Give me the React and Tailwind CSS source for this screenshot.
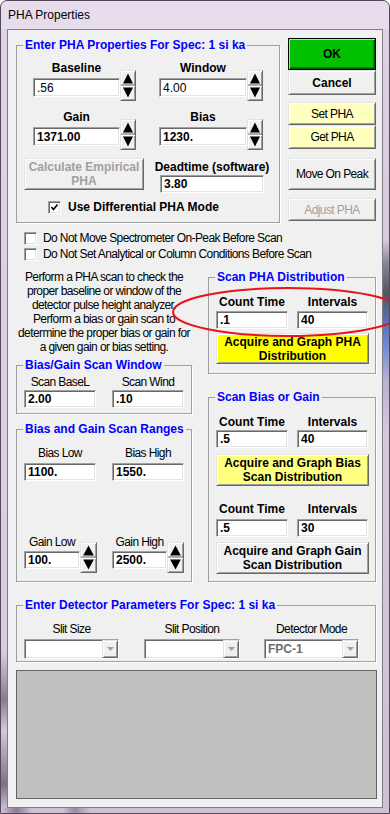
import React from 'react';

const reg = 'text-[12px] tracking-[-0.6px] leading-[14px]';
const bold = 'text-[12px] font-bold leading-[14px]';
const sunken =
  'border border-t-[#a0a0a0] border-l-[#a0a0a0] border-r-[#ffffff] border-b-[#ffffff] shadow-[inset_1px_1px_0_#696969,inset_-1px_-1px_0_#e3e3e3]';
const raised =
  'border border-t-[#e3e3e3] border-l-[#e3e3e3] border-r-[#696969] border-b-[#696969] shadow-[inset_1px_1px_0_#ffffff,inset_-1px_-1px_0_#a0a0a0]';

function Group({ title, className, children }) {
  return (
    <fieldset className={`border border-[#a0a0a0] shadow-[1px_1px_0_#ffffff] ${className}`}>
      <legend className="ml-[6px] px-[2px] text-[12px] font-bold leading-[14px] text-[#0000ff]">{title}</legend>
      {children}
    </fieldset>
  );
}

function Field({ value, className, weight = 'font-bold' }) {
  return (
    <div className={`bg-white ${sunken} flex items-center pl-[3px] text-[12px] leading-none text-black ${weight} ${className}`}>
      {value}
    </div>
  );
}

function Spinner({ className }) {
  return (
    <div className={`bg-[#f0f0f0] ${raised} ${className}`}>
      <svg viewBox="0 0 14 29" className="w-full h-full block" preserveAspectRatio="none">
        <polygon points="2,12.5 7,2.5 12,12.5" fill="#000" />
        <line x1="0" y1="14" x2="14" y2="14" stroke="#696969" strokeWidth="1" />
        <line x1="0" y1="15.5" x2="14" y2="15.5" stroke="#ffffff" strokeWidth="1" />
        <polygon points="2,16.5 12,16.5 7,26.5" fill="#000" />
      </svg>
    </div>
  );
}

function SpinField({ label, value, w, spinW = 'w-[16px]', weight = 'font-bold', labelClass = bold, rise = '-mt-[5px]', h = 'h-[19px]' }) {
  return (
    <div className="flex flex-col">
      <div className={`${w} text-center whitespace-nowrap ${labelClass}`}>{label}</div>
      <div className={`flex items-end ${rise}`}>
        <Field value={value} weight={weight} className={`${w} ${h} mb-[4px]`} />
        <Spinner className={`${spinW} h-[31px]`} />
      </div>
    </div>
  );
}

function LabeledField({ label, value, w, labelClass = bold, gap = 'mt-[2px]' }) {
  return (
    <div className={`${w} flex flex-col items-center`}>
      <div className={`whitespace-nowrap ${labelClass}`}>{label}</div>
      <Field value={value} className={`${w} h-[18px] ${gap}`} />
    </div>
  );
}

function Check({ checked }) {
  return (
    <div className={`w-[13px] h-[13px] shrink-0 bg-white ${sunken} flex items-center justify-center`}>
      {checked && (
        <svg viewBox="0 0 9 9" className="w-[9px] h-[9px]">
          <polyline points="1.5,4 3.5,6.5 7.5,1.5" fill="none" stroke="#000" strokeWidth="1.6" />
        </svg>
      )}
    </div>
  );
}

function Combo({ value, className }) {
  return (
    <div className={`bg-white ${sunken} flex ${className}`}>
      <div className="flex-1 flex items-center pl-[3px] text-[12px] font-bold text-[#6d6d6d]">{value}</div>
      <div className={`w-[16px] bg-[#f0f0f0] ${raised} flex items-center justify-center`}>
        <svg viewBox="0 0 7 4" className="w-[7px] h-[4px]">
          <polygon points="0,0 7,0 3.5,4" fill="#a0a0a0" />
        </svg>
      </div>
    </div>
  );
}

function Btn({ children, className }) {
  return (
    <button type="button" className={`${raised} flex flex-col items-center justify-center text-black ${className}`}>
      {children}
    </button>
  );
}

export default function App() {
  return (
    <div className="relative w-[390px] h-[814px] font-['Liberation_Sans',Arial,sans-serif] text-black rounded-t-[7px] border border-[#54495a] bg-gradient-to-b from-[#e7dded] to-[#d3c4da] flex flex-col overflow-hidden">
      {/* title bar */}
      <div className="h-[28px] flex items-center pl-[7px] text-[12px] leading-none">PHA Properties</div>

      <div className="flex-1 flex">
        <div className="w-[6px] bg-[linear-gradient(to_bottom,#dfd3e5_0%,#d9cce0_80%,#8a7b90_86%,#d4c6db_90%,#7f7086_97%,#cbbdd2_100%)]" />

        {/* client area */}
        <div className="flex-1 border border-[#85798b] bg-[#f0f0f0] flex flex-col">
          {/* top row */}
          <div className="flex pt-[8px] pl-[8px]">
            <Group title="Enter PHA Properties For Spec: 1 si ka" className="w-[264px] h-[185px]">
              <div className="flex gap-[23px] pl-[16px] pt-[9px]">
                <SpinField label="Baseline" value=".56" w="w-[87px]" weight="font-normal" />
                <SpinField label="Window" value="4.00" w="w-[88px]" weight="font-normal" />
              </div>
              <div className="flex gap-[23px] pl-[16px] pt-[9px]">
                <SpinField label="Gain" value="1371.00" w="w-[87px]" />
                <SpinField label="Bias" value="1230." w="w-[88px]" />
              </div>
              <div className="flex pl-[7px] mt-[8px]">
                <Btn className={`w-[120px] h-[32px] ${bold} text-[#a0a0a0]`}>
                  <span className="text-[#a0a0a0]">Calculate Empirical</span>
                  <span className="text-[#a0a0a0]">PHA</span>
                </Btn>
                <div className="ml-[16px] w-[104px] flex flex-col items-center pt-[2px]">
                  <div className={`whitespace-nowrap ${bold}`}>Deadtime (software)</div>
                  <Field value="3.80" className="w-[104px] h-[18px] mt-[1px]" />
                </div>
              </div>
              <div className="flex items-center gap-[7px] pl-[31px] mt-[7px] h-[14px]">
                <Check checked />
                <span className={bold}>Use Differential PHA Mode</span>
              </div>
            </Group>

            <div className="ml-[8px] w-[88px] flex flex-col">
              <button type="button" className={`h-[32px] border border-black bg-[#00c000] shadow-[inset_1px_1px_0_#9cf09c,inset_-1px_-1px_0_#005800,inset_-2px_-2px_0_#008a00] ${bold}`}>
                OK
              </button>
              <Btn className={`h-[25px] bg-[#f0f0f0] ${bold}`}>Cancel</Btn>
              <Btn className={`h-[23px] mt-[7px] bg-[#ffffc0] ${reg}`}>Set PHA</Btn>
              <Btn className={`h-[24px] bg-[#ffffc0] ${reg}`}>Get PHA</Btn>
              <Btn className={`h-[32px] mt-[9px] bg-[#f0f0f0] ${reg}`}>Move On Peak</Btn>
              <Btn className={`h-[23px] mt-[8px] bg-[#f0f0f0] ${reg}`}>
                <span className="text-[#a0a0a0]">Adjust PHA</span>
              </Btn>
            </div>
          </div>

          {/* option checkboxes */}
          <div className="flex flex-col gap-[2px] mt-[8px] pl-[16px]">
            <div className="flex items-center gap-[6px] h-[14px]">
              <Check />
              <span className={`whitespace-nowrap ${reg}`}>Do Not Move Spectrometer On-Peak Before Scan</span>
            </div>
            <div className="flex items-center gap-[6px] h-[14px]">
              <Check />
              <span className={`whitespace-nowrap ${reg}`}>Do Not Set Analytical or Column Conditions Before Scan</span>
            </div>
          </div>

          {/* middle area */}
          <div className="flex mt-[9px] pl-[8px]">
            <div className="w-[176px] flex flex-col">
              <p className={`-mx-[6px] text-center whitespace-nowrap ${reg}`}>
                Perform a PHA scan to check the
                <br />
                proper baseline or window of the
                <br />
                detector pulse height analyzer.
                <br />
                Perform a bias or gain scan to
                <br />
                determine the proper bias or gain for
                <br />
                a given gain or bias setting.
              </p>

              <Group title="Bias/Gain Scan Window" className="w-[176px] h-[56px] mt-[4px]">
                <div className="flex gap-[16px] pl-[7px] pt-[3px]">
                  <LabeledField label="Scan BaseL" value="2.00" w="w-[72px]" labelClass={reg} gap="mt-[1px]" />
                  <LabeledField label="Scan Wind" value=".10" w="w-[72px]" labelClass={reg} gap="mt-[1px]" />
                </div>
              </Group>

              <Group title="Bias and Gain Scan Ranges" className="w-[176px] h-[160px] mt-[8px]">
                <div className="flex gap-[16px] pl-[7px] pt-[10px]">
                  <LabeledField label="Bias Low" value="1100." w="w-[72px]" labelClass={reg} gap="mt-[3px]" />
                  <LabeledField label="Bias High" value="1550." w="w-[72px]" labelClass={reg} gap="mt-[3px]" />
                </div>
                <div className="flex pl-[7px] mt-[54px]">
                  <div className="w-[88px]">
                    <SpinField label="Gain Low" value="100." w="w-[56px]" spinW="w-[17px]" labelClass={reg} rise="-mt-[7px]" h="h-[18px]" />
                  </div>
                  <SpinField label="Gain High" value="2500." w="w-[55px]" spinW="w-[17px]" labelClass={reg} rise="-mt-[7px]" h="h-[18px]" />
                </div>
              </Group>
            </div>

            <div className="ml-[16px] w-[168px] flex flex-col">
              <Group title="Scan PHA Distribution" className="w-[168px] h-[104px]">
                <div className="flex gap-[9px] pl-[7px] pt-[11px]">
                  <LabeledField label="Count Time" value=".1" w="w-[72px]" />
                  <LabeledField label="Intervals" value="40" w="w-[71px]" />
                </div>
                <div className="pl-[7px] mt-[4px]">
                  <Btn className={`w-[153px] h-[31px] bg-[#ffff00] ${bold}`}>
                    <span>Acquire and Graph PHA</span>
                    <span>Distribution</span>
                  </Btn>
                </div>
              </Group>

              <Group title="Scan Bias or Gain" className="w-[168px] h-[192px] mt-[16px]">
                <div className="flex gap-[9px] pl-[7px] pt-[11px]">
                  <LabeledField label="Count Time" value=".5" w="w-[72px]" gap="mt-[1px]" />
                  <LabeledField label="Intervals" value="40" w="w-[71px]" gap="mt-[1px]" />
                </div>
                <div className="pl-[7px] mt-[6px]">
                  <Btn className={`w-[153px] h-[32px] bg-[#ffff80] ${bold}`}>
                    <span>Acquire and Graph Bias</span>
                    <span>Scan Distribution</span>
                  </Btn>
                </div>
                <div className="flex gap-[9px] pl-[7px] mt-[16px]">
                  <LabeledField label="Count Time" value=".5" w="w-[72px]" gap="mt-[3px]" />
                  <LabeledField label="Intervals" value="30" w="w-[71px]" gap="mt-[3px]" />
                </div>
                <div className="pl-[7px] mt-[5px]">
                  <Btn className={`w-[153px] h-[32px] bg-[#f0f0f0] ${bold}`}>
                    <span>Acquire and Graph Gain</span>
                    <span>Scan Distribution</span>
                  </Btn>
                </div>
              </Group>
            </div>
          </div>

          {/* detector parameters */}
          <div className="pl-[8px] mt-[16px]">
            <Group title="Enter Detector Parameters For Spec: 1 si ka" className="w-[360px] h-[64px]">
              <div className="flex pl-[7px] pt-[10px] gap-[25px]">
                <div className="w-[95px] flex flex-col items-center">
                  <div className={`whitespace-nowrap ${reg}`}>Slit Size</div>
                  <Combo className="w-[95px] h-[20px] mt-[3px]" />
                </div>
                <div className="w-[96px] flex flex-col items-center">
                  <div className={`whitespace-nowrap ${reg}`}>Slit Position</div>
                  <Combo className="w-[96px] h-[20px] mt-[3px]" />
                </div>
                <div className="w-[95px] flex flex-col items-center -ml-[1px]">
                  <div className={`whitespace-nowrap ${reg}`}>Detector Mode</div>
                  <Combo value="FPC-1" className="w-[95px] h-[20px] mt-[3px]" />
                </div>
              </div>
            </Group>
          </div>

          {/* grey panel */}
          <div className="ml-[8px] mt-[8px] w-[361px] h-[129px] bg-[#c0c0c0] border border-[#646464]" />
        </div>

        <div className="w-[6px] bg-[linear-gradient(to_bottom,#ddd1e4_0%,#d8cbe0_27%,#8a8794_30%,#55535f_34%,#5b76bd_38%,#6f8ed4_41%,#b9b1d1_45%,#d6c9de_52%,#cdbfd5_100%)]" />
      </div>
      <div className="h-[5px] bg-[linear-gradient(to_right,#cfc0d6_0%,#8d7c93_4%,#cfc0d6_8%,#cfc0d6_16%,#9c8aa2_19%,#cfc0d6_23%,#cfc0d6_100%)]" />

      {/* red annotation ring */}
      <svg className="absolute left-0 top-0 pointer-events-none" width="390" height="814">
        <ellipse cx="287" cy="311" rx="115" ry="24" fill="none" stroke="#e8141b" strokeWidth="2" />
      </svg>
    </div>
  );
}
